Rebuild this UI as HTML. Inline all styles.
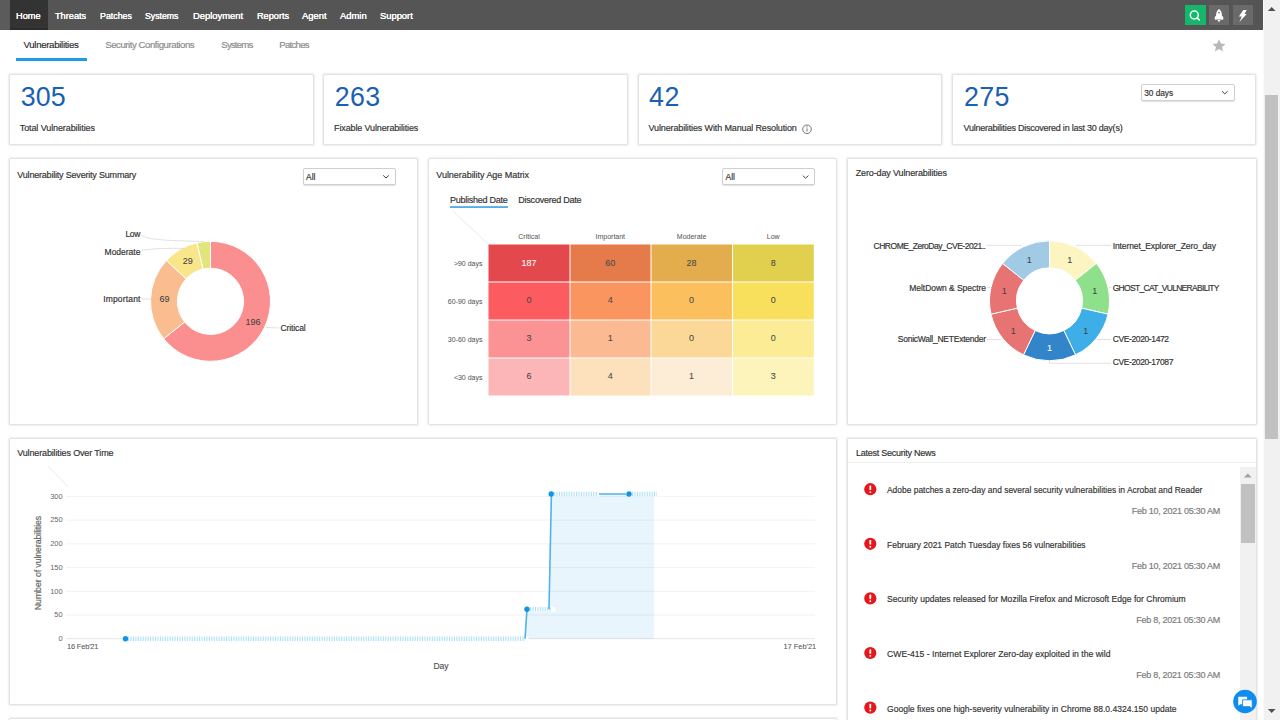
<!DOCTYPE html>
<html><head><meta charset="utf-8"><title>Vulnerabilities</title>
<style>
*{box-sizing:border-box}
html,body{margin:0;padding:0}
body{width:1280px;height:720px;overflow:hidden;position:relative;background:#ffffff;font-family:"Liberation Sans",sans-serif}
.t{position:absolute;white-space:nowrap;line-height:1;font-family:"Liberation Sans",sans-serif;-webkit-text-stroke:0.18px currentColor}
.b{position:absolute}
.card{position:absolute;background:#fff;border:1px solid #e3e3e3;border-radius:2px;box-shadow:0 0 1.5px 0.6px rgba(0,0,0,0.07)}
.dd{position:absolute;background:#fff;border:1px solid #cfcfcf;border-radius:2px;box-shadow:0 1px 1px rgba(0,0,0,0.12)}
</style></head><body>
<!-- navbar -->
<div class="b" style="left:0;top:0;width:1263px;height:30px;background:#555555"></div>
<div class="b" style="left:0;top:0;width:10px;height:30px;background:#5b5b5b"></div>
<div class="b" style="left:10px;top:0;width:38px;height:30px;background:#333333"></div>
<div class="b" style="left:10px;top:28px;width:38px;height:2px;background:#2b2b2b"></div>
<div class="b" style="left:1184.8px;top:5px;width:20.9px;height:20.4px;background:#15b86b"></div>
<div class="b" style="left:1208.8px;top:5.2px;width:20.5px;height:19.9px;background:#6a6a6a"></div>
<div class="b" style="left:1232.8px;top:5.2px;width:20.3px;height:19.9px;background:#6a6a6a"></div>
<svg class="b" style="left:0;top:0" width="1280" height="30">
  <circle cx="1194.3" cy="15" r="4" fill="none" stroke="#fff" stroke-width="1.5"/>
  <line x1="1197.2" y1="17.9" x2="1199.3" y2="20" stroke="#fff" stroke-width="1.6" stroke-linecap="round"/>
  <path d="M1219 9 C1221.4 10.6 1222.1 13.6 1221.9 16.6 L1221.6 19.6 L1216.4 19.6 L1216.1 16.6 C1215.9 13.6 1216.6 10.6 1219 9 Z" fill="#fff"/>
  <path d="M1216.4 15.6 C1214.6 16.4 1214.3 18.4 1214.9 19.8 L1216.9 19.4 Z" fill="#fff"/>
  <path d="M1221.6 15.6 C1223.4 16.4 1223.7 18.4 1223.1 19.8 L1221.1 19.4 Z" fill="#fff"/>
  <circle cx="1219" cy="12.6" r="0.85" fill="#6a6a6a"/>
  <path d="M1217.5 20.1 L1220.5 20.1 L1219 22.2 Z" fill="#fff"/>
  <path d="M1243.2 10 L1246.7 10 L1244.6 13.9 L1246.7 13.9 L1239.4 21.9 L1241.7 16.5 L1238.9 16.5 Z" fill="#fff"/>
</svg>
<!-- main scrollbar -->
<div class="b" style="left:1263px;top:0;width:17px;height:720px;background:#f1f1f1;border-left:1px solid #fafafa"></div>
<div class="b" style="left:1264.8px;top:95px;width:12.9px;height:343.8px;background:#c1c1c1"></div>
<svg class="b" style="left:1263px;top:0" width="17" height="720">
  <path d="M4.9 11 L8.7 7 L12.5 11 Z" fill="#505050"/>
  <path d="M4.9 709 L8.7 713 L12.5 709 Z" fill="#505050"/>
</svg>
<!-- subtabs -->
<div class="b" style="left:16px;top:58.2px;width:71px;height:2.5px;background:#1e9be8"></div>
<svg class="b" style="left:1210px;top:37px" width="20" height="18">
  <path d="M9 2.2 L10.9 6.5 L15.6 6.9 L12 10 L13.1 14.6 L9 12.1 L4.9 14.6 L6 10 L2.4 6.9 L7.1 6.5 Z" fill="#b9b9b9"/>
</svg>
<!-- KPI cards -->
<div class="card" style="left:9px;top:74px;width:304.5px;height:70.8px"></div>
<div class="card" style="left:323.2px;top:74px;width:304.5px;height:70.8px"></div>
<div class="card" style="left:637.5px;top:74px;width:304.5px;height:70.8px"></div>
<div class="card" style="left:951.8px;top:74px;width:304.5px;height:70.8px"></div>
<div class="dd" style="left:1140.9px;top:84.2px;width:93.8px;height:17px"></div>
<svg class="b" style="left:0;top:70px" width="1280" height="80">
  <path d="M1222 21.2 L1224.8 23.9 L1227.6 21.2" fill="none" stroke="#444" stroke-width="1"/>
  <circle cx="807" cy="59.3" r="4.3" fill="none" stroke="#666" stroke-width="0.9"/>
  <line x1="807" y1="58.3" x2="807" y2="61.6" stroke="#666" stroke-width="0.9"/>
  <circle cx="807" cy="56.9" r="0.55" fill="#666"/>
</svg>
<!-- row 2 panels -->
<div class="card" style="left:9px;top:158px;width:409.3px;height:266.5px"></div>
<div class="card" style="left:428px;top:158px;width:409.3px;height:266.5px;box-shadow:0 0 3px rgba(0,0,0,0.12)"></div>
<div class="card" style="left:847px;top:158px;width:409.5px;height:266.5px"></div>
<div class="dd" style="left:303px;top:168.2px;width:92.5px;height:16.8px"></div>
<div class="dd" style="left:722px;top:168.4px;width:93.3px;height:16.8px"></div>
<svg class="b" style="left:0;top:150px" width="1280" height="280">
  <path d="M383.2 25.4 L386 28 L388.8 25.4" fill="none" stroke="#444" stroke-width="1"/>
  <path d="M802.8 25.6 L805.6 28.2 L808.4 25.6" fill="none" stroke="#444" stroke-width="1"/>
</svg>
<svg class="b" style="left:0;top:0" width="1280" height="720">
<path d="M210.50 241.30 A60 60 0 1 1 163.65 338.78 L184.65 321.98 A33.1 33.1 0 1 0 210.50 268.20 Z" fill="#fb8f8f" stroke="#fff" stroke-width="1"/>
<path d="M163.65 338.78 A60 60 0 0 1 166.47 260.54 L186.21 278.82 A33.1 33.1 0 0 0 184.65 321.98 Z" fill="#f9bd90" stroke="#fff" stroke-width="1"/>
<path d="M166.47 260.54 A60 60 0 0 1 197.02 242.83 L203.06 269.05 A33.1 33.1 0 0 0 186.21 278.82 Z" fill="#f9e68a" stroke="#fff" stroke-width="1"/>
<path d="M197.02 242.83 A60 60 0 0 1 210.50 241.30 L210.50 268.20 A33.1 33.1 0 0 0 203.06 269.05 Z" fill="#e2e57b" stroke="#fff" stroke-width="1"/>
<path d="M141.5 235.5 C150 239.5 160 240.5 204 241.5" fill="none" stroke="#d9d9d9" stroke-width="0.8"/>
<path d="M141.5 250.5 C150 248.5 170 248 186 248.5" fill="none" stroke="#d9d9d9" stroke-width="0.8"/>
<path d="M141.5 299 L151 299" fill="none" stroke="#d9d9d9" stroke-width="0.8"/>
<path d="M266 327.5 L279.5 328" fill="none" stroke="#d9d9d9" stroke-width="0.8"/>
<path d="M1049.50 240.80 A60 60 0 0 1 1096.41 263.39 L1075.30 280.22 A33 33 0 0 0 1049.50 267.80 Z" fill="#fdf5c1" stroke="#fff" stroke-width="1"/>
<path d="M1096.41 263.39 A60 60 0 0 1 1108.00 314.15 L1081.67 308.14 A33 33 0 0 0 1075.30 280.22 Z" fill="#8ee08b" stroke="#fff" stroke-width="1"/>
<path d="M1108.00 314.15 A60 60 0 0 1 1075.53 354.86 L1063.82 330.53 A33 33 0 0 0 1081.67 308.14 Z" fill="#3daee7" stroke="#fff" stroke-width="1"/>
<path d="M1075.53 354.86 A60 60 0 0 1 1023.47 354.86 L1035.18 330.53 A33 33 0 0 0 1063.82 330.53 Z" fill="#3385ca" stroke="#fff" stroke-width="1"/>
<path d="M1023.47 354.86 A60 60 0 0 1 991.00 314.15 L1017.33 308.14 A33 33 0 0 0 1035.18 330.53 Z" fill="#e87373" stroke="#fff" stroke-width="1"/>
<path d="M991.00 314.15 A60 60 0 0 1 1002.59 263.39 L1023.70 280.22 A33 33 0 0 0 1017.33 308.14 Z" fill="#e87373" stroke="#fff" stroke-width="1"/>
<path d="M1002.59 263.39 A60 60 0 0 1 1049.50 240.80 L1049.50 267.80 A33 33 0 0 0 1023.70 280.22 Z" fill="#a1cae4" stroke="#fff" stroke-width="1"/>
<line x1="987" y1="245.3" x2="1022" y2="245.3" stroke="#d9d9d9" stroke-width="0.8"/>
<line x1="987" y1="287.4" x2="990" y2="287.4" stroke="#d9d9d9" stroke-width="0.8"/>
<line x1="987" y1="339.5" x2="1001" y2="339.5" stroke="#d9d9d9" stroke-width="0.8"/>
<line x1="1076" y1="245.3" x2="1111" y2="245.3" stroke="#d9d9d9" stroke-width="0.8"/>
<line x1="1109" y1="287.4" x2="1111" y2="287.4" stroke="#d9d9d9" stroke-width="0.8"/>
<line x1="1097" y1="339.5" x2="1111" y2="339.5" stroke="#d9d9d9" stroke-width="0.8"/>
<path d="M1049.5 361 L1049.5 363.2 L1111 363.2" fill="none" stroke="#d9d9d9" stroke-width="0.8"/>
</svg>
<svg class="b" style="left:0;top:0" width="1280" height="720">
<line x1="452" y1="210" x2="488.5" y2="244.5" stroke="#ececec" stroke-width="1"/>
<rect x="488.5" y="244.5" width="81.0" height="37.0" fill="#e2484c"/>
<rect x="570.5" y="244.5" width="80.0" height="37.0" fill="#e57a4a"/>
<rect x="651.5" y="244.5" width="80.5" height="37.0" fill="#e3ac4c"/>
<rect x="733" y="244.5" width="80.8" height="37.0" fill="#e0d04e"/>
<rect x="488.5" y="282.5" width="81.0" height="37.0" fill="#fc5c60"/>
<rect x="570.5" y="282.5" width="80.0" height="37.0" fill="#fb9560"/>
<rect x="651.5" y="282.5" width="80.5" height="37.0" fill="#fbbf5e"/>
<rect x="733" y="282.5" width="80.8" height="37.0" fill="#f9e05c"/>
<rect x="488.5" y="320.5" width="81.0" height="37.0" fill="#fb9294"/>
<rect x="570.5" y="320.5" width="80.0" height="37.0" fill="#fbba92"/>
<rect x="651.5" y="320.5" width="80.5" height="37.0" fill="#fbd898"/>
<rect x="733" y="320.5" width="80.8" height="37.0" fill="#fcec96"/>
<rect x="488.5" y="358.5" width="81.0" height="37.0" fill="#fdb6b8"/>
<rect x="570.5" y="358.5" width="80.0" height="37.0" fill="#fde0bc"/>
<rect x="651.5" y="358.5" width="80.5" height="37.0" fill="#feedd6"/>
<rect x="733" y="358.5" width="80.8" height="37.0" fill="#fdf4bc"/>
<rect x="450" y="206.3" width="58" height="1.5" fill="#2b9be0"/>
</svg>
<!-- row 3 -->
<div class="card" style="left:9px;top:438px;width:828.4px;height:266.8px"></div>
<div class="card" style="left:847px;top:438px;width:409.5px;height:290px"></div>
<div class="card" style="left:9px;top:718px;width:828.4px;height:20px"></div>
<div class="b" style="left:848px;top:462.3px;width:407.5px;height:1px;background:#efefef"></div>
<svg class="b" style="left:0;top:0" width="1280" height="720">
<line x1="48" y1="466" x2="68" y2="487" stroke="#ececec" stroke-width="1"/>
<path d="M525 638.7 L527 609.3 L549 609.3 L551.2 493.9 L654 493.9 L654 638.7 Z" fill="#e8f5fc"/>
<line x1="66" y1="496.4" x2="815" y2="496.4" stroke="rgba(0,0,0,0.055)" stroke-width="1"/>
<line x1="66" y1="520.1" x2="815" y2="520.1" stroke="rgba(0,0,0,0.055)" stroke-width="1"/>
<line x1="66" y1="543.8" x2="815" y2="543.8" stroke="rgba(0,0,0,0.055)" stroke-width="1"/>
<line x1="66" y1="567.6" x2="815" y2="567.6" stroke="rgba(0,0,0,0.055)" stroke-width="1"/>
<line x1="66" y1="591.3" x2="815" y2="591.3" stroke="rgba(0,0,0,0.055)" stroke-width="1"/>
<line x1="66" y1="615.0" x2="815" y2="615.0" stroke="rgba(0,0,0,0.055)" stroke-width="1"/>
<line x1="66" y1="638.7" x2="815" y2="638.7" stroke="rgba(0,0,0,0.1)" stroke-width="1"/>
<line x1="126" y1="638.7" x2="526" y2="638.7" stroke="#fff" stroke-width="5.2" stroke-linecap="round"/>
<line x1="128" y1="638.7" x2="525" y2="638.7" stroke="#ade0f7" stroke-width="4.4" stroke-dasharray="1.1 1.35"/>
<line x1="528" y1="609.3" x2="553" y2="609.3" stroke="#fff" stroke-width="5.2" stroke-linecap="round"/>
<line x1="530" y1="609.3" x2="552" y2="609.3" stroke="#ade0f7" stroke-width="4.4" stroke-dasharray="1.1 1.35"/>
<line x1="552" y1="494" x2="598" y2="494" stroke="#fff" stroke-width="5.2" stroke-linecap="round"/>
<line x1="554" y1="494" x2="597" y2="494" stroke="#ade0f7" stroke-width="4.4" stroke-dasharray="1.1 1.35"/>
<line x1="630" y1="494" x2="658" y2="494" stroke="#fff" stroke-width="5.2" stroke-linecap="round"/>
<line x1="632" y1="494" x2="657" y2="494" stroke="#ade0f7" stroke-width="4.4" stroke-dasharray="1.1 1.35"/>
<path d="M525 638.7 L527 609.3 M549 609.3 L551.4 494 M599 494 L626 494" fill="none" stroke="#4fb3ec" stroke-width="1.6"/>
<circle cx="125.5" cy="638.7" r="2.7" fill="#1193e8"/>
<circle cx="527" cy="609.3" r="2.7" fill="#1193e8"/>
<circle cx="551.2" cy="494" r="2.7" fill="#1193e8"/>
<circle cx="629" cy="494" r="2.7" fill="#1193e8"/>
</svg>
<div class="t" style="left:37.5px;top:562.8px;font-size:8.8px;color:#666;transform:translate(-50%,-50%) rotate(-90deg);letter-spacing:-0.1px">Number of vulnerabilities</div>
<div class="b" style="left:1240px;top:467px;width:16px;height:253px;background:#f1f1f1"></div>
<div class="b" style="left:1241px;top:483.5px;width:13.6px;height:59.5px;background:#c1c1c1"></div>
<svg class="b" style="left:0;top:0" width="1280" height="720">
<path d="M1243.8 477.6 L1247.8 473.6 L1251.8 477.6 Z" fill="#a3a3a3"/>
<circle cx="870.3" cy="489.2" r="6.1" fill="#e5171c"/>
<rect x="869.4" y="485.4" width="1.8" height="4.6" rx="0.6" fill="#fff"/>
<circle cx="870.3" cy="492.09999999999997" r="0.95" fill="#fff"/>
<circle cx="870.3" cy="543.8" r="6.1" fill="#e5171c"/>
<rect x="869.4" y="540.0" width="1.8" height="4.6" rx="0.6" fill="#fff"/>
<circle cx="870.3" cy="546.6999999999999" r="0.95" fill="#fff"/>
<circle cx="870.3" cy="598.4" r="6.1" fill="#e5171c"/>
<rect x="869.4" y="594.6" width="1.8" height="4.6" rx="0.6" fill="#fff"/>
<circle cx="870.3" cy="601.3" r="0.95" fill="#fff"/>
<circle cx="870.3" cy="653.0" r="6.1" fill="#e5171c"/>
<rect x="869.4" y="649.2" width="1.8" height="4.6" rx="0.6" fill="#fff"/>
<circle cx="870.3" cy="655.9" r="0.95" fill="#fff"/>
<circle cx="870.3" cy="707.6" r="6.1" fill="#e5171c"/>
<rect x="869.4" y="703.8000000000001" width="1.8" height="4.6" rx="0.6" fill="#fff"/>
<circle cx="870.3" cy="710.5" r="0.95" fill="#fff"/>
<circle cx="1245" cy="701.5" r="11.8" fill="#0f8cf0"/>
<path d="M1238.3 696.7 h8.8 v7.5 h-6.6 l-2.2 1.6 z" fill="#fff"/>
<path d="M1242.6 699.8 h9.6 v6.9 l-0.6 1.7 l-1.6 -1.7 h-7.4 z" fill="#fff" stroke="#0f8cf0" stroke-width="0.9"/>
<path d="M1244.8 703.2 h5" stroke="#bfe0fb" stroke-width="0.7" stroke-dasharray="0.8 0.6"/>
</svg>
<div class="t" style="left:16.40px;top:10.88px;font-size:9.95px;color:#ffffff;letter-spacing:0.000px;font-weight:400;transform:scaleX(0.9278);transform-origin:left center;text-shadow:0 0 0.3px #fff;">Home</div>
<div class="t" style="left:55.10px;top:10.88px;font-size:9.95px;color:#ffffff;letter-spacing:0.000px;font-weight:400;transform:scaleX(0.9257);transform-origin:left center;text-shadow:0 0 0.3px #fff;">Threats</div>
<div class="t" style="left:100.00px;top:10.88px;font-size:9.95px;color:#ffffff;letter-spacing:0.000px;font-weight:400;transform:scaleX(0.8880);transform-origin:left center;text-shadow:0 0 0.3px #fff;">Patches</div>
<div class="t" style="left:145.30px;top:10.88px;font-size:9.95px;color:#ffffff;letter-spacing:0.000px;font-weight:400;transform:scaleX(0.8790);transform-origin:left center;text-shadow:0 0 0.3px #fff;">Systems</div>
<div class="t" style="left:192.60px;top:10.88px;font-size:9.95px;color:#ffffff;letter-spacing:0.000px;font-weight:400;transform:scaleX(0.9466);transform-origin:left center;text-shadow:0 0 0.3px #fff;">Deployment</div>
<div class="t" style="left:256.60px;top:10.88px;font-size:9.95px;color:#ffffff;letter-spacing:0.000px;font-weight:400;transform:scaleX(0.9225);transform-origin:left center;text-shadow:0 0 0.3px #fff;">Reports</div>
<div class="t" style="left:301.80px;top:10.88px;font-size:9.95px;color:#ffffff;letter-spacing:0.000px;font-weight:400;transform:scaleX(0.9467);transform-origin:left center;text-shadow:0 0 0.3px #fff;">Agent</div>
<div class="t" style="left:340.20px;top:10.88px;font-size:9.95px;color:#ffffff;letter-spacing:0.000px;font-weight:400;transform:scaleX(0.9442);transform-origin:left center;text-shadow:0 0 0.3px #fff;">Admin</div>
<div class="t" style="left:379.90px;top:10.88px;font-size:9.95px;color:#ffffff;letter-spacing:0.000px;font-weight:400;transform:scaleX(0.9422);transform-origin:left center;text-shadow:0 0 0.3px #fff;">Support</div>
<div class="t" style="left:23.50px;top:39.87px;font-size:9.6px;color:#2f2f2f;letter-spacing:-0.292px;font-weight:400;">Vulnerabilities</div>
<div class="t" style="left:105.20px;top:39.87px;font-size:9.6px;color:#8c8c8c;letter-spacing:-0.443px;font-weight:400;">Security Configurations</div>
<div class="t" style="left:221.30px;top:39.87px;font-size:9.6px;color:#8c8c8c;letter-spacing:-0.814px;font-weight:400;">Systems</div>
<div class="t" style="left:279.20px;top:39.87px;font-size:9.6px;color:#8c8c8c;letter-spacing:-0.710px;font-weight:400;">Patches</div>
<div class="t" style="left:20.76px;top:83.91px;font-size:26.8px;color:#1a60b3;letter-spacing:0.094px;font-weight:400;-webkit-text-stroke:0;">305</div>
<div class="t" style="left:334.80px;top:83.91px;font-size:26.8px;color:#1a60b3;letter-spacing:0.360px;font-weight:400;-webkit-text-stroke:0;">263</div>
<div class="t" style="left:649.00px;top:83.91px;font-size:26.8px;color:#1a60b3;letter-spacing:0.594px;font-weight:400;-webkit-text-stroke:0;">42</div>
<div class="t" style="left:963.90px;top:83.91px;font-size:26.8px;color:#1a60b3;letter-spacing:0.360px;font-weight:400;-webkit-text-stroke:0;">275</div>
<div class="t" style="left:19.76px;top:123.78px;font-size:9px;color:#333;letter-spacing:-0.101px;font-weight:400;">Total Vulnerabilities</div>
<div class="t" style="left:334.10px;top:123.78px;font-size:9px;color:#333;letter-spacing:-0.136px;font-weight:400;">Fixable Vulnerabilities</div>
<div class="t" style="left:648.50px;top:123.78px;font-size:9px;color:#333;letter-spacing:-0.133px;font-weight:400;">Vulnerabilities With Manual Resolution</div>
<div class="t" style="left:963.50px;top:123.78px;font-size:9px;color:#333;letter-spacing:-0.235px;font-weight:400;">Vulnerabilities Discovered in last 30 day(s)</div>
<div class="t" style="left:1144.30px;top:88.72px;font-size:8.3px;color:#333;letter-spacing:-0.037px;font-weight:400;">30 days</div>
<div class="t" style="left:17.30px;top:171.38px;font-size:9px;color:#333;letter-spacing:-0.197px;font-weight:400;">Vulnerability Severity Summary</div>
<div class="t" style="left:436.30px;top:171.38px;font-size:9px;color:#333;letter-spacing:-0.042px;font-weight:400;">Vulnerability Age Matrix</div>
<div class="t" style="left:855.70px;top:168.88px;font-size:9px;color:#333;letter-spacing:-0.130px;font-weight:400;">Zero-day Vulnerabilities</div>
<div class="t" style="left:17.20px;top:448.78px;font-size:9px;color:#333;letter-spacing:-0.140px;font-weight:400;">Vulnerabilities Over Time</div>
<div class="t" style="left:855.90px;top:448.68px;font-size:9px;color:#333;letter-spacing:-0.247px;font-weight:400;">Latest Security News</div>
<div class="t" style="left:306.00px;top:172.70px;font-size:8.5px;color:#333;letter-spacing:0.000px;font-weight:400;">All</div>
<div class="t" style="left:725.50px;top:173.00px;font-size:8.5px;color:#333;letter-spacing:0.000px;font-weight:400;">All</div>
<div class="t" style="left:125.47px;top:230.10px;font-size:8.5px;color:#333;letter-spacing:-0.331px;font-weight:400;">Low</div>
<div class="t" style="left:104.58px;top:248.30px;font-size:8.5px;color:#333;letter-spacing:-0.015px;font-weight:400;">Moderate</div>
<div class="t" style="left:103.17px;top:295.10px;font-size:8.5px;color:#333;letter-spacing:0.166px;font-weight:400;">Important</div>
<div class="t" style="left:280.60px;top:324.10px;font-size:8.5px;color:#333;letter-spacing:-0.123px;font-weight:400;">Critical</div>
<div class="t" style="left:182.69px;top:256.58px;font-size:9px;color:#444;letter-spacing:0.000px;font-weight:400;-webkit-text-stroke:0.08px currentColor;">29</div>
<div class="t" style="left:159.39px;top:295.18px;font-size:9px;color:#444;letter-spacing:0.000px;font-weight:400;-webkit-text-stroke:0.08px currentColor;">69</div>
<div class="t" style="left:245.38px;top:317.58px;font-size:9px;color:#444;letter-spacing:0.000px;font-weight:400;-webkit-text-stroke:0.08px currentColor;">196</div>
<div class="t" style="left:449.90px;top:195.88px;font-size:9px;color:#333;letter-spacing:-0.246px;font-weight:400;">Published Date</div>
<div class="t" style="left:518.30px;top:195.88px;font-size:9px;color:#333;letter-spacing:-0.229px;font-weight:400;">Discovered Date</div>
<div class="t" style="left:518.30px;top:232.87px;font-size:7px;color:#5a5a5a;letter-spacing:0.000px;font-weight:400;-webkit-text-stroke:0.05px currentColor;">Critical</div>
<div class="t" style="left:595.51px;top:232.87px;font-size:7px;color:#5a5a5a;letter-spacing:0.000px;font-weight:400;-webkit-text-stroke:0.05px currentColor;">Important</div>
<div class="t" style="left:676.81px;top:232.87px;font-size:7px;color:#5a5a5a;letter-spacing:0.000px;font-weight:400;-webkit-text-stroke:0.05px currentColor;">Moderate</div>
<div class="t" style="left:766.78px;top:232.87px;font-size:7px;color:#5a5a5a;letter-spacing:0.000px;font-weight:400;-webkit-text-stroke:0.05px currentColor;">Low</div>
<div class="t" style="left:453.89px;top:259.77px;font-size:7px;color:#5a5a5a;letter-spacing:0.000px;font-weight:400;-webkit-text-stroke:0.05px currentColor;">&gt;90 days</div>
<div class="t" style="left:447.86px;top:297.57px;font-size:7px;color:#5a5a5a;letter-spacing:0.000px;font-weight:400;-webkit-text-stroke:0.05px currentColor;">60-90 days</div>
<div class="t" style="left:447.86px;top:335.57px;font-size:7px;color:#5a5a5a;letter-spacing:0.000px;font-weight:400;-webkit-text-stroke:0.05px currentColor;">30-60 days</div>
<div class="t" style="left:453.89px;top:373.57px;font-size:7px;color:#5a5a5a;letter-spacing:0.000px;font-weight:400;-webkit-text-stroke:0.05px currentColor;">&lt;30 days</div>
<div class="t" style="left:521.48px;top:258.58px;font-size:9px;color:#fff;letter-spacing:0.000px;font-weight:400;-webkit-text-stroke:0.08px currentColor;">187</div>
<div class="t" style="left:605.29px;top:258.58px;font-size:9px;color:#4a4a4a;letter-spacing:0.000px;font-weight:400;-webkit-text-stroke:0.08px currentColor;">60</div>
<div class="t" style="left:686.59px;top:258.58px;font-size:9px;color:#4a4a4a;letter-spacing:0.000px;font-weight:400;-webkit-text-stroke:0.08px currentColor;">28</div>
<div class="t" style="left:770.69px;top:258.58px;font-size:9px;color:#4a4a4a;letter-spacing:0.000px;font-weight:400;-webkit-text-stroke:0.08px currentColor;">8</div>
<div class="t" style="left:526.49px;top:296.38px;font-size:9px;color:#4a4a4a;letter-spacing:0.000px;font-weight:400;-webkit-text-stroke:0.08px currentColor;">0</div>
<div class="t" style="left:607.79px;top:296.38px;font-size:9px;color:#4a4a4a;letter-spacing:0.000px;font-weight:400;-webkit-text-stroke:0.08px currentColor;">4</div>
<div class="t" style="left:689.09px;top:296.38px;font-size:9px;color:#4a4a4a;letter-spacing:0.000px;font-weight:400;-webkit-text-stroke:0.08px currentColor;">0</div>
<div class="t" style="left:770.69px;top:296.38px;font-size:9px;color:#4a4a4a;letter-spacing:0.000px;font-weight:400;-webkit-text-stroke:0.08px currentColor;">0</div>
<div class="t" style="left:526.49px;top:334.38px;font-size:9px;color:#4a4a4a;letter-spacing:0.000px;font-weight:400;-webkit-text-stroke:0.08px currentColor;">3</div>
<div class="t" style="left:607.79px;top:334.38px;font-size:9px;color:#4a4a4a;letter-spacing:0.000px;font-weight:400;-webkit-text-stroke:0.08px currentColor;">1</div>
<div class="t" style="left:689.09px;top:334.38px;font-size:9px;color:#4a4a4a;letter-spacing:0.000px;font-weight:400;-webkit-text-stroke:0.08px currentColor;">0</div>
<div class="t" style="left:770.69px;top:334.38px;font-size:9px;color:#4a4a4a;letter-spacing:0.000px;font-weight:400;-webkit-text-stroke:0.08px currentColor;">0</div>
<div class="t" style="left:526.49px;top:372.38px;font-size:9px;color:#4a4a4a;letter-spacing:0.000px;font-weight:400;-webkit-text-stroke:0.08px currentColor;">6</div>
<div class="t" style="left:607.79px;top:372.38px;font-size:9px;color:#4a4a4a;letter-spacing:0.000px;font-weight:400;-webkit-text-stroke:0.08px currentColor;">4</div>
<div class="t" style="left:689.09px;top:372.38px;font-size:9px;color:#4a4a4a;letter-spacing:0.000px;font-weight:400;-webkit-text-stroke:0.08px currentColor;">1</div>
<div class="t" style="left:770.69px;top:372.38px;font-size:9px;color:#4a4a4a;letter-spacing:0.000px;font-weight:400;-webkit-text-stroke:0.08px currentColor;">3</div>
<div class="t" style="left:873.53px;top:241.60px;font-size:8.5px;color:#333;letter-spacing:-0.471px;font-weight:400;">CHROME_ZeroDay_CVE-2021..</div>
<div class="t" style="left:909.26px;top:283.50px;font-size:8.5px;color:#333;letter-spacing:-0.044px;font-weight:400;">MeltDown &amp; Spectre</div>
<div class="t" style="left:897.75px;top:335.40px;font-size:8.5px;color:#333;letter-spacing:-0.249px;font-weight:400;">SonicWall_NETExtender</div>
<div class="t" style="left:1112.70px;top:241.60px;font-size:8.5px;color:#333;letter-spacing:-0.106px;font-weight:400;">Internet_Explorer_Zero_day</div>
<div class="t" style="left:1112.70px;top:283.50px;font-size:8.5px;color:#333;letter-spacing:-0.699px;font-weight:400;">GHOST_CAT_VULNERABILITY</div>
<div class="t" style="left:1112.70px;top:335.40px;font-size:8.5px;color:#333;letter-spacing:-0.382px;font-weight:400;">CVE-2020-1472</div>
<div class="t" style="left:1112.70px;top:358.40px;font-size:8.5px;color:#333;letter-spacing:-0.385px;font-weight:400;">CVE-2020-17087</div>
<div class="t" style="left:1067.17px;top:255.69px;font-size:9px;color:#444;letter-spacing:0.000px;font-weight:400;-webkit-text-stroke:0.08px currentColor;">1</div>
<div class="t" style="left:1092.33px;top:287.23px;font-size:9px;color:#444;letter-spacing:0.000px;font-weight:400;-webkit-text-stroke:0.08px currentColor;">1</div>
<div class="t" style="left:1083.35px;top:326.57px;font-size:9px;color:#444;letter-spacing:0.000px;font-weight:400;-webkit-text-stroke:0.08px currentColor;">1</div>
<div class="t" style="left:1046.99px;top:344.08px;font-size:9px;color:#fff;letter-spacing:0.000px;font-weight:400;-webkit-text-stroke:0.08px currentColor;">1</div>
<div class="t" style="left:1010.64px;top:326.57px;font-size:9px;color:#444;letter-spacing:0.000px;font-weight:400;-webkit-text-stroke:0.08px currentColor;">1</div>
<div class="t" style="left:1001.66px;top:287.23px;font-size:9px;color:#444;letter-spacing:0.000px;font-weight:400;-webkit-text-stroke:0.08px currentColor;">1</div>
<div class="t" style="left:1026.82px;top:255.69px;font-size:9px;color:#444;letter-spacing:0.000px;font-weight:400;-webkit-text-stroke:0.08px currentColor;">1</div>
<div class="t" style="left:50.18px;top:492.65px;font-size:7.5px;color:#666;letter-spacing:0.000px;font-weight:400;-webkit-text-stroke:0;">300</div>
<div class="t" style="left:50.18px;top:516.37px;font-size:7.5px;color:#666;letter-spacing:0.000px;font-weight:400;-webkit-text-stroke:0;">250</div>
<div class="t" style="left:50.18px;top:540.09px;font-size:7.5px;color:#666;letter-spacing:0.000px;font-weight:400;-webkit-text-stroke:0;">200</div>
<div class="t" style="left:50.18px;top:563.81px;font-size:7.5px;color:#666;letter-spacing:0.000px;font-weight:400;-webkit-text-stroke:0;">150</div>
<div class="t" style="left:50.18px;top:587.53px;font-size:7.5px;color:#666;letter-spacing:0.000px;font-weight:400;-webkit-text-stroke:0;">100</div>
<div class="t" style="left:54.36px;top:611.25px;font-size:7.5px;color:#666;letter-spacing:0.000px;font-weight:400;-webkit-text-stroke:0;">50</div>
<div class="t" style="left:58.53px;top:634.97px;font-size:7.5px;color:#666;letter-spacing:0.000px;font-weight:400;-webkit-text-stroke:0;">0</div>
<div class="t" style="left:67.00px;top:643.15px;font-size:7.5px;color:#555;letter-spacing:-0.203px;font-weight:400;-webkit-text-stroke:0.05px currentColor;">16 Feb'21</div>
<div class="t" style="left:783.45px;top:642.95px;font-size:7.5px;color:#555;letter-spacing:-0.047px;font-weight:400;-webkit-text-stroke:0.05px currentColor;">17 Feb'21</div>
<div class="t" style="left:433.44px;top:661.70px;font-size:8.5px;color:#555;letter-spacing:0.000px;font-weight:400;">Day</div>
<div class="t" style="left:887.40px;top:485.00px;font-size:9.8px;color:#333;letter-spacing:0.000px;font-weight:400;transform:scaleX(0.8605);transform-origin:left center;">Adobe patches a zero-day and several security vulnerabilities in Acrobat and Reader</div>
<div class="t" style="left:1131.74px;top:506.98px;font-size:9px;color:#7c7c7c;letter-spacing:-0.256px;font-weight:400;">Feb 10, 2021 05:30 AM</div>
<div class="t" style="left:887.40px;top:539.70px;font-size:9.8px;color:#333;letter-spacing:0.000px;font-weight:400;transform:scaleX(0.8642);transform-origin:left center;">February 2021 Patch Tuesday fixes 56 vulnerabilities</div>
<div class="t" style="left:1131.74px;top:561.73px;font-size:9px;color:#7c7c7c;letter-spacing:-0.256px;font-weight:400;">Feb 10, 2021 05:30 AM</div>
<div class="t" style="left:887.40px;top:594.40px;font-size:9.8px;color:#333;letter-spacing:0.000px;font-weight:400;transform:scaleX(0.8721);transform-origin:left center;">Security updates released for Mozilla Firefox and Microsoft Edge for Chromium</div>
<div class="t" style="left:1136.26px;top:616.48px;font-size:9px;color:#7c7c7c;letter-spacing:-0.244px;font-weight:400;">Feb 8, 2021 05:30 AM</div>
<div class="t" style="left:887.40px;top:649.10px;font-size:9.8px;color:#333;letter-spacing:0.000px;font-weight:400;transform:scaleX(0.8808);transform-origin:left center;">CWE-415 - Internet Explorer Zero-day exploited in the wild</div>
<div class="t" style="left:1136.26px;top:671.23px;font-size:9px;color:#7c7c7c;letter-spacing:-0.244px;font-weight:400;">Feb 8, 2021 05:30 AM</div>
<div class="t" style="left:887.40px;top:703.80px;font-size:9.8px;color:#333;letter-spacing:0.000px;font-weight:400;transform:scaleX(0.8717);transform-origin:left center;">Google fixes one high-severity vulnerability in Chrome 88.0.4324.150 update</div>
</body></html>
